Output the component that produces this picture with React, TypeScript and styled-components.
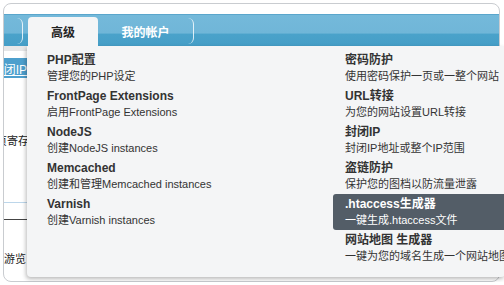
import React from 'react';
import styled, { createGlobalStyle } from 'styled-components';

type Item = {
    title: string;
    desc: string;
    active?: boolean;
}

const leftItems: Item[] = [
    { title: 'PHP配置', desc: '管理您的PHP设定' },
    { title: 'FrontPage Extensions', desc: '启用FrontPage Extensions' },
    { title: 'NodeJS', desc: '创建NodeJS instances' },
    { title: 'Memcached', desc: '创建和管理Memcached instances' },
    { title: 'Varnish', desc: '创建Varnish instances' },
];

const rightItems: Item[] = [
    { title: '密码防护', desc: '使用密码保护一页或一整个网站' },
    { title: 'URL转接', desc: '为您的网站设置URL转接' },
    { title: '封闭IP', desc: '封闭IP地址或整个IP范围' },
    { title: '盗链防护', desc: '保护您的图档以防流量泄露' },
    { title: '.htaccess生成器', desc: '一键生成.htaccess文件', active: true },
    { title: '网站地图 生成器', desc: '一键为您的域名生成一个网站地图' },
];

const GlobalStyle = createGlobalStyle`
    html, body {
        margin: 0;
        padding: 0;
        background: #fff;
        overflow: hidden;
    }
    body {
        font-family: "Liberation Sans", "Noto Sans CJK SC", sans-serif;
    }
`

const App: React.FunctionComponent = () => {
    const renderItem = (item: Item, idx: number) => (
        <MenuItem key={idx} $active={item.active}>
            <ItemTitle>{item.title}</ItemTitle>
            <ItemDesc>{item.desc}</ItemDesc>
        </MenuItem>
    )

    return (
        <>
            <GlobalStyle />
            <Frame>
                <TopStrip />
                <NavBar>
                    <Tab $edge>&nbsp;</Tab>
                    <ActiveTab>高级</ActiveTab>
                    <Tab>我的帐户</Tab>
                </NavBar>
                <Body>
                    <PageEdge>
                        <GrayBand />
                        <BlueLink><span>闭IP</span></BlueLink>
                        <EdgeText $top={56} $shift={-8}>页寄存</EdgeText>
                        <Rule $color="#bcd6ea" $top={53} />
                        <Rule $color="#444" $top={16} />
                        <EdgeText $top={32} $shift={0}>游览</EdgeText>
                    </PageEdge>
                    <Dropdown>
                        <Column>{leftItems.map(renderItem)}</Column>
                        <Column>{rightItems.map(renderItem)}</Column>
                    </Dropdown>
                </Body>
            </Frame>
        </>
    )
}

const Frame = styled.div`
    margin: 3px 4px 0 3px;
    height: 279px;
    border: 1px solid #c9ccd0;
    border-radius: 8px;
    background: #fff;
    display: flex;
    flex-direction: column;
    box-sizing: border-box;
`

const TopStrip = styled.div`
    height: 10px;
    flex-shrink: 0;
`

const NavBar = styled.div`
    height: 32px;
    flex-shrink: 0;
    display: flex;
    align-items: flex-end;
    border-top: 1px solid #5aa6cc;
    box-sizing: border-box;
    background: linear-gradient(to bottom, #74b9da 0%, #70b6d8 58%, #4aa2ca 62%, #459ec7 100%);
`

const Tab = styled.div<{ $edge?: boolean }>`
    width: ${(p) => (p.$edge ? '18px' : '95px')};
    height: 26px;
    margin-bottom: 2px;
    display: flex;
    align-items: center;
    justify-content: center;
    color: #fff;
    font-weight: bold;
    font-size: 12px;
    border-right: 1px solid rgba(255, 255, 255, 0.8);
    border-radius: 0 6px 6px 0;
`

const ActiveTab = styled.div`
    width: 70px;
    height: 29px;
    margin-left: 5px;
    display: flex;
    align-items: center;
    justify-content: center;
    box-sizing: border-box;
    background: #f4f5f6;
    border-radius: 4px 4px 0 0;
    color: #222;
    font-weight: bold;
    font-size: 12px;
    position: relative;
    z-index: 2;
`

const Body = styled.div`
    flex: 1;
    display: flex;
    min-height: 0;
`

const PageEdge = styled.div`
    width: 23px;
    flex-shrink: 0;
    display: flex;
    flex-direction: column;
    overflow: hidden;
    border-radius: 0 0 0 8px;
`

const GrayBand = styled.div`
    height: 5px;
    background: #e6e7e8;
`

const BlueLink = styled.div`
    margin-top: 7px;
    height: 20px;
    background: #4d9fcd;
    display: flex;
    align-items: center;
    justify-content: flex-end;
    color: #fff;
    font-size: 12px;
    white-space: nowrap;
    span {
        text-decoration: underline;
    }
`

const EdgeText = styled.div<{ $top: number; $shift: number }>`
    margin-top: ${(p) => p.$top}px;
    margin-left: ${(p) => p.$shift}px;
    font-size: 11px;
    line-height: 15px;
    color: #222;
    white-space: nowrap;
`

const Rule = styled.div<{ $color: string; $top: number }>`
    margin-top: ${(p) => p.$top}px;
    height: 1px;
    background: ${(p) => p.$color};
`

const Dropdown = styled.div`
    width: 478px;
    flex-shrink: 0;
    height: 231px;
    margin-right: -10px;
    padding: 4px 0 0 8px;
    box-sizing: border-box;
    display: grid;
    grid-template-columns: 298px 1fr;
    align-content: start;
    background: #f4f5f6;
    border-radius: 0 0 4px 4px;
    box-shadow: -1px 2px 4px rgba(0, 0, 0, 0.28);
    position: relative;
    z-index: 1;
`

const Column = styled.div`
    display: flex;
    flex-direction: column;
`

const MenuItem = styled.div<{ $active?: boolean }>`
    height: 36px;
    padding: 2px 12px;
    box-sizing: border-box;
    white-space: nowrap;
    border-radius: 3px 0 0 3px;
    background: ${(p) => (p.$active ? '#535d67' : 'transparent')};
    color: ${(p) => (p.$active ? '#fff' : '#333')};
`

const ItemTitle = styled.div`
    font-size: 12px;
    font-weight: bold;
    line-height: 17px;
`

const ItemDesc = styled.div`
    font-size: 11px;
    line-height: 15px;
`

export default App;
